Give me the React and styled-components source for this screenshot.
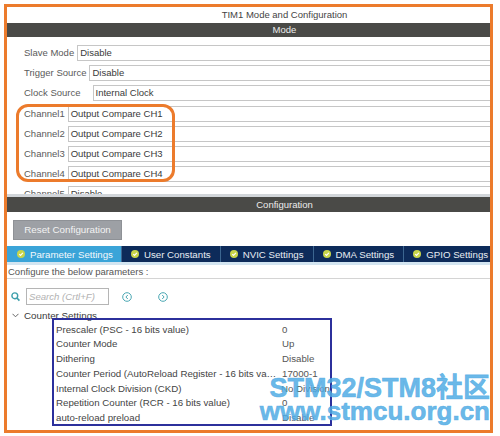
import React from 'react'
import styled, { createGlobalStyle } from 'styled-components'

const GlobalStyle = createGlobalStyle`
  body {
    margin: 0;
    background: #fff;
    font-family: "Liberation Sans", Arial, sans-serif;
  }
`

const modeRows = [
  { label: 'Slave Mode', value: 'Disable' },
  { label: 'Trigger Source', value: 'Disable' },
  { label: 'Clock Source', value: 'Internal Clock', gap: 12 },
  { label: 'Channel1', value: 'Output Compare CH1' },
  { label: 'Channel2', value: 'Output Compare CH2' },
  { label: 'Channel3', value: 'Output Compare CH3' },
  { label: 'Channel4', value: 'Output Compare CH4' },
  { label: 'Channel5', value: 'Disable' },
]

const tabs = ['Parameter Settings', 'User Constants', 'NVIC Settings', 'DMA Settings', 'GPIO Settings']

const params = [
  ['Prescaler (PSC - 16 bits value)', '0'],
  ['Counter Mode', 'Up'],
  ['Dithering', 'Disable'],
  ['Counter Period (AutoReload Register - 16 bits value)', '17000-1'],
  ['Internal Clock Division (CKD)', 'No Division'],
  ['Repetition Counter (RCR - 16 bits value)', '0'],
  ['auto-reload preload', 'Disable'],
]

const CheckIcon = () => (
  <svg width="8" height="8" viewBox="0 0 8 8">
    <circle cx="4" cy="4" r="4" fill="#c8d54a" />
    <path d="M2.2 4.1 L3.5 5.3 L5.9 2.8" stroke="#fff" strokeWidth="1.2" fill="none" />
  </svg>
)

const SearchIcon = () => (
  <svg width="9" height="10" viewBox="0 0 9 10">
    <circle cx="3.8" cy="3.8" r="2.9" stroke="#3d9fab" strokeWidth="1.4" fill="none" />
    <path d="M6 6 L8.4 8.6" stroke="#3d9fab" strokeWidth="1.6" />
  </svg>
)

const NavIcon = ({ dir }) => (
  <svg width="10" height="10" viewBox="0 0 10 10">
    <circle cx="5" cy="5" r="4.3" stroke="#4aa7b3" strokeWidth="1" fill="none" />
    <path d={dir === 'prev' ? 'M5.8 3 L3.9 5 L5.8 7' : 'M4.2 3 L6.1 5 L4.2 7'} stroke="#4aa7b3" strokeWidth="1" fill="none" />
  </svg>
)

export default function App() {
  return (
    <>
      <GlobalStyle />
      <Frame>
        <Title>TIM1 Mode and Configuration</Title>
        <SectionBar>Mode</SectionBar>
        <ModeBody>
          {modeRows.map((row) => (
            <ModeRow key={row.label} $gap={row.gap}>
              <FieldLabel>{row.label}</FieldLabel>
              <Field>{row.value}</Field>
            </ModeRow>
          ))}
          <Highlight />
        </ModeBody>
        <ScrollEdge />
        <SectionBar $tall>Configuration</SectionBar>
        <ConfigBody>
          <ResetButton>Reset Configuration</ResetButton>
          <TabBar>
            {tabs.map((tab, i) => (
              <Tab key={tab} $active={i === 0} $last={i === tabs.length - 1}>
                <CheckIcon />
                {tab}
              </Tab>
            ))}
          </TabBar>
          <TabUnderline />
          <Hint>Configure the below parameters :</Hint>
          <SearchRow>
            <SearchIcon />
            <SearchBox>Search (Crtl+F)</SearchBox>
            <NavIcon dir="prev" />
            <NavIcon dir="next" />
          </SearchRow>
          <GroupRow>
            <Chevron>
              <svg width="7" height="5" viewBox="0 0 7 5">
                <path d="M0.5 0.8 L3.5 3.8 L6.5 0.8" stroke="#666" strokeWidth="1" fill="none" />
              </svg>
            </Chevron>
            Counter Settings
          </GroupRow>
          <ParamBox>
            {params.map(([name, value]) => (
              <ParamRow key={name}>
                <ParamName>{name}</ParamName>
                <ParamValue>{value}</ParamValue>
              </ParamRow>
            ))}
          </ParamBox>
        </ConfigBody>
        <Watermark>
          <WatermarkLine>STM32/STM8社区</WatermarkLine>
          <WatermarkUrl>www.stmcu.org.cn</WatermarkUrl>
        </Watermark>
      </Frame>
    </>
  )
}

const Frame = styled.div`
  position: relative;
  box-sizing: border-box;
  width: 489px;
  height: 429px;
  margin: 4px 0 0 4px;
  border: 3px solid #ec7b2c;
  overflow: hidden;
  display: flex;
  flex-direction: column;
`

const Title = styled.div`
  height: 16px;
  line-height: 16px;
  padding-left: 72px;
  text-align: center;
  font-size: 9.5px;
  color: #444;
`

const SectionBar = styled.div`
  height: ${(p) => (p.$tall ? 15 : 14)}px;
  line-height: ${(p) => (p.$tall ? 15 : 14)}px;
  padding-left: 72px;
  text-align: center;
  background: #4a4a47;
  color: #ececec;
  font-size: 9.5px;
`

const ModeBody = styled.div`
  position: relative;
  height: 157px;
  padding: 8px 0 0 17px;
  box-sizing: border-box;
  overflow: hidden;
  display: flex;
  flex-direction: column;
  gap: 4.2px;
`

const ModeRow = styled.div`
  display: flex;
  align-items: stretch;
  gap: ${(p) => p.$gap || 3}px;
  flex: none;
  height: 16px;
`

const FieldLabel = styled.span`
  line-height: 16px;
  font-size: 9.5px;
  color: #5a5a5a;
  white-space: nowrap;
`

const Field = styled.div`
  flex: 1;
  box-sizing: border-box;
  height: 16px;
  line-height: 14px;
  padding-left: 2px;
  border: 1px solid #c6c6c6;
  border-right: none;
  font-size: 9.5px;
  color: #3a3a3a;
`

const Highlight = styled.div`
  position: absolute;
  left: 9px;
  top: 67px;
  width: 159px;
  height: 78px;
  box-sizing: border-box;
  border: 3px solid #ec7b2c;
  border-radius: 12px;
`

const ScrollEdge = styled.div`
  height: 3px;
  background: #d2d6da;
`

const ConfigBody = styled.div`
  flex: 1;
  display: flex;
  flex-direction: column;
  padding-top: 8px;
`

const ResetButton = styled.div`
  box-sizing: border-box;
  width: 109px;
  height: 20px;
  margin-left: 6px;
  line-height: 18px;
  text-align: center;
  background: #9da0a5;
  border: 1px solid #8e9196;
  color: #f3f3f3;
  font-size: 9.8px;
`

const TabBar = styled.div`
  display: flex;
  height: 16px;
  margin-top: 6px;
`

const Tab = styled.div`
  display: flex;
  align-items: center;
  gap: 5px;
  flex: ${(p) => (p.$last ? 1 : 'none')};
  padding: 0 ${(p) => (p.$active ? 8 : 9)}px 0 ${(p) => (p.$active ? 10 : 9)}px;
  background: ${(p) => (p.$active ? '#3aa4d8' : '#0d2b5a')};
  border-left: ${(p) => (p.$active ? 'none' : '1px solid #3c6690')};
  color: ${(p) => (p.$active ? '#f4f8fb' : '#e8edf3')};
  font-size: 9.7px;
  white-space: nowrap;
`

const TabUnderline = styled.div`
  height: 3px;
  background: #d3e5f1;
`

const Hint = styled.div`
  height: 13px;
  line-height: 13px;
  padding-left: 1px;
  border-bottom: 1px solid #d4d4d4;
  font-size: 9.5px;
  color: #555;
`

const SearchRow = styled.div`
  display: flex;
  align-items: center;
  height: 17px;
  margin-top: 9px;
  padding-left: 4px;

  & > svg:first-child {
    margin-right: 6px;
  }
  & > svg:nth-child(3) {
    margin-left: 13px;
  }
  & > svg:nth-child(4) {
    margin-left: 26px;
  }
`

const SearchBox = styled.div`
  box-sizing: border-box;
  width: 83px;
  height: 17px;
  line-height: 15px;
  padding-left: 2px;
  border: 1px solid #b5b5b5;
  font-size: 9.6px;
  font-style: italic;
  color: #b2b2b2;
`

const GroupRow = styled.div`
  display: flex;
  align-items: center;
  height: 12px;
  margin-top: 4px;
  padding-left: 5px;
  font-size: 9.8px;
  color: #3a3a3a;
`

const Chevron = styled.span`
  display: flex;
  width: 12px;
`

const ParamBox = styled.div`
  box-sizing: border-box;
  width: 280px;
  height: 108px;
  margin: -3px 0 0 45px;
  padding-top: 2.5px;
  border: 2px solid #2c309c;
`

const ParamRow = styled.div`
  display: flex;
  height: 14.8px;
  line-height: 14.8px;
  font-size: 9.7px;
  color: #444;
`

const ParamName = styled.span`
  width: 224px;
  padding-left: 2px;
  box-sizing: border-box;
  white-space: nowrap;
  overflow: hidden;
  text-overflow: ellipsis;
`

const ParamValue = styled.span`
  padding-left: 4px;
  white-space: nowrap;
  color: #555;
`

const Watermark = styled.div`
  position: absolute;
  right: 0;
  top: 368px;
  text-align: right;
  color: rgba(80, 172, 228, 0.85);
  font-weight: bold;
  pointer-events: none;
`

const WatermarkLine = styled.div`
  font-family: "Liberation Sans", "Noto Sans CJK SC", sans-serif;
  font-size: 27px;
  line-height: 27px;
  white-space: nowrap;
  -webkit-text-stroke: 0.6px rgba(80, 172, 228, 0.85);
`

const WatermarkUrl = styled.div`
  margin-top: -4px;
  font-size: 26px;
  line-height: 26px;
  white-space: nowrap;
  -webkit-text-stroke: 0.6px rgba(80, 172, 228, 0.85);
`
